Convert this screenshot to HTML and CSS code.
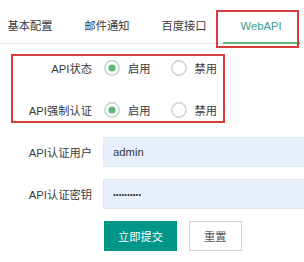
FILE: index.html
```html
<!DOCTYPE html>
<html lang="zh-CN">
<head>
<meta charset="utf-8">
<title>WebAPI</title>
<link rel="stylesheet" href="styles.css">
</head>
<body>
<div class="page">
  <ul class="tabs">
    <li class="tab">基本配置</li>
    <li class="tab">邮件通知</li>
    <li class="tab">百度接口</li>
    <li class="tab tab-this">WebAPI</li>
  </ul>
  <form class="form">
    <div class="item">
      <label class="label">API状态</label>
      <div class="radios">
        <span class="radio">
          <svg class="ico" width="16" height="16" viewBox="0 0 16 16"><circle cx="8" cy="8" r="7.2" fill="#fff" stroke="#b7d9c0" stroke-width="1.4"/><circle cx="8" cy="8" r="3.6" fill="#5FB878"/></svg>
          <span>启用</span>
        </span>
        <span class="radio">
          <svg class="ico" width="16" height="16" viewBox="0 0 16 16"><circle cx="8" cy="8" r="7.2" fill="#fff" stroke="#cfcfcf" stroke-width="1.4"/></svg>
          <span>禁用</span>
        </span>
      </div>
    </div>
    <div class="item">
      <label class="label">API强制认证</label>
      <div class="radios">
        <span class="radio">
          <svg class="ico" width="16" height="16" viewBox="0 0 16 16"><circle cx="8" cy="8" r="7.2" fill="#fff" stroke="#b7d9c0" stroke-width="1.4"/><circle cx="8" cy="8" r="3.6" fill="#5FB878"/></svg>
          <span>启用</span>
        </span>
        <span class="radio">
          <svg class="ico" width="16" height="16" viewBox="0 0 16 16"><circle cx="8" cy="8" r="7.2" fill="#fff" stroke="#cfcfcf" stroke-width="1.4"/></svg>
          <span>禁用</span>
        </span>
      </div>
    </div>
    <div class="item">
      <label class="label">API认证用户</label>
      <input class="input" type="text" value="admin">
    </div>
    <div class="item">
      <label class="label">API认证密钥</label>
      <input class="input input-pass" type="password" value="1234567890">
    </div>
    <div class="item buttons">
      <button type="button" class="btn btn-primary">立即提交</button>
      <button type="button" class="btn btn-plain">重置</button>
    </div>
  </form>
  <div class="mark mark-tab"></div>
  <div class="mark mark-radios"></div>
</div>
</body>
</html>
```
FILE: styles.css
```css
html, body {
  margin: 0;
  padding: 0;
  background: #fff;
}
body {
  width: 304px;
  height: 262px;
  overflow: hidden;
  font-family: "Liberation Sans", "Noto Sans CJK SC", sans-serif;
  font-size: 11.25px;
  color: #3a3a3a;
}
.page {
  position: relative;
  width: 304px;
  height: 262px;
  padding-top: 10px;
  box-sizing: border-box;
  overflow: hidden;
}
.tabs {
  list-style: none;
  margin: 0 0 0 -8.5px;
  padding: 0;
  display: flex;
  border-bottom: 1px solid #e6e6e6;
}
.tab {
  position: relative;
  height: 33px;
  line-height: 33px;
  padding: 0 15.5px;
  min-width: 46px;
  text-align: center;
  white-space: nowrap;
}
.tab-this {
  color: #3f9c8c;
}
.tab-this::after {
  content: "";
  position: absolute;
  left: 0;
  right: 0;
  bottom: -1px;
  height: 2px;
  background: #5FB878;
}
.form {
  margin: 9px 0 0 0;
  padding: 0;
}
.item {
  display: flex;
  align-items: center;
  height: 30px;
  margin-bottom: 12px;
}
.label {
  width: 103px;
  flex: none;
  box-sizing: border-box;
  padding-right: 11px;
  text-align: right;
  white-space: nowrap;
}
.radios {
  display: flex;
  align-items: center;
  padding-left: 1px;
}
.radio {
  display: flex;
  align-items: center;
  margin-right: 20px;
}
.ico {
  display: block;
  margin-right: 8px;
}
.input {
  flex: 1;
  min-width: 0;
  height: 30px;
  box-sizing: border-box;
  margin: 0 -2px 0 0;
  padding: 0 9px;
  border: 1px solid #e3e8ef;
  border-right: none;
  background: #e8f0fe;
  font-family: "Liberation Sans", "Noto Sans CJK SC", sans-serif;
  font-size: 11.25px;
  color: #333;
  outline: none;
}
.input-pass {
  font-size: 7.5px;
  letter-spacing: 0.2px;
}
.buttons {
  padding-left: 104px;
}
.btn {
  height: 30px;
  box-sizing: border-box;
  margin: 0;
  font-family: "Liberation Sans", "Noto Sans CJK SC", sans-serif;
  font-size: 11.25px;
  cursor: pointer;
}
.btn-primary {
  padding: 0 14px;
  border: none;
  background: #009688;
  color: #fff;
  margin-right: 12px;
}
.btn-plain {
  padding: 0 14px;
  border: 1px solid #d2d2d2;
  background: #fff;
  color: #555;
}
.mark {
  position: absolute;
  box-sizing: border-box;
  border: 2px solid #db3b3b;
}
.mark-tab {
  left: 216px;
  top: 10px;
  width: 83px;
  height: 38px;
}
.mark-radios {
  left: 11px;
  top: 54px;
  width: 214px;
  height: 69px;
}
```
